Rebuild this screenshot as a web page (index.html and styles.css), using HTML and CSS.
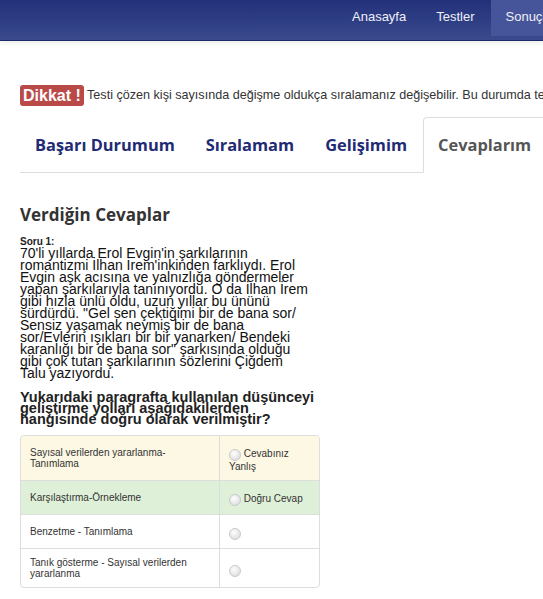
FILE: index.html
```html
<!DOCTYPE html>
<html lang="tr">
<head>
<meta charset="utf-8">
<title>Sonuçlarım</title>
<link rel="stylesheet" href="styles.css">
</head>
<body>
<header class="navbar">
  <nav class="nav">
    <a class="nav-item" href="#">Anasayfa</a>
    <a class="nav-item" href="#">Testler</a>
    <a class="nav-item active" href="#">Sonuçlarım</a>
    <a class="nav-item" href="#">Çıkış</a>
  </nav>
</header>
<main class="page">
  <p class="notice"><span class="label">Dikkat !</span> Testi çözen kişi sayısında değişme oldukça sıralamanız değişebilir. Bu durumda testi tekrar kontrol ediniz.</p>
  <ul class="tabs">
    <li class="tab"><a href="#">Başarı Durumum</a></li>
    <li class="tab"><a href="#">Sıralamam</a></li>
    <li class="tab"><a href="#">Gelişimim</a></li>
    <li class="tab active"><a href="#">Cevaplarım</a></li>
  </ul>
  <section class="answers">
    <h2 class="title">Verdiğin Cevaplar</h2>
    <div class="qnum">Soru 1:</div>
    <p class="passage">70'li yıllarda Erol Evgin'in şarkılarının romantizmi İlhan İrem'inkinden farklıydı. Erol Evgin aşk acısına ve yalnızlığa göndermeler yapan şarkılarıyla tanınıyordu. O da İlhan İrem gibi hızla ünlü oldu, uzun yıllar bu ününü sürdürdü. "Gel sen çektiğimi bir de bana sor/ Sensiz yaşamak neymiş bir de bana sor/Evlerin ışıkları bir bir yanarken/ Bendeki karanlığı bir de bana sor" şarkısında olduğu gibi çok tutan şarkılarının sözlerini Çiğdem Talu yazıyordu.</p>
    <p class="question">Yukarıdaki paragrafta kullanılan düşünceyi geliştirme yolları aşağıdakilerden hangisinde doğru olarak verilmiştir?</p>
    <table class="options">
      <tr class="warn">
        <td class="opt">Sayısal verilerden yararlanma-Tanımlama</td>
        <td class="res"><span class="radio"></span> Cevabınız Yanlış</td>
      </tr>
      <tr class="ok">
        <td class="opt">Karşılaştırma-Örnekleme</td>
        <td class="res"><span class="radio"></span> Doğru Cevap</td>
      </tr>
      <tr>
        <td class="opt">Benzetme - Tanımlama</td>
        <td class="res"><span class="radio"></span></td>
      </tr>
      <tr>
        <td class="opt">Tanık gösterme - Sayısal verilerden yararlanma</td>
        <td class="res"><span class="radio"></span></td>
      </tr>
    </table>
  </section>
</main>
</body>
</html>
```
FILE: styles.css
```css
html, body {
  margin: 0;
  padding: 0;
  overflow: hidden;
  background: #fff;
  font-family: "Liberation Sans", Arial, sans-serif;
  color: #333;
}

.navbar {
  height: 40px;
  background: linear-gradient(to bottom, #22317a, #3a4a8c);
  border-bottom: 1px solid #1c2a68;
  box-shadow: 0 2px 5px rgba(0, 0, 0, 0.08);
}

.nav {
  display: flex;
  padding-left: 337px;
  width: 800px;
}

.nav-item {
  display: block;
  height: 36px;
  line-height: 33px;
  padding: 0 15px;
  font-size: 13px;
  color: #eef0f8;
  text-decoration: none;
  white-space: nowrap;
}

.nav-item.active {
  background: #46559a;
  margin-left: 1px;
}

.page {
  padding: 0 20px;
  width: 900px;
}

.notice {
  margin: 44px 0 0;
  font-size: 12.6px;
  line-height: 21px;
  white-space: nowrap;
}

.label {
  display: inline-block;
  background: #b94a48;
  color: #fff;
  font-weight: bold;
  font-size: 16px;
  line-height: 21px;
  padding: 0 3px;
  border-radius: 3px;
  vertical-align: top;
}

.tabs {
  list-style: none;
  margin: 11px 0 0;
  padding: 0;
  display: flex;
  border-bottom: 1px solid #ddd;
}

.tab {
  margin-right: 1px;
  margin-bottom: -1px;
}

.tab a {
  display: block;
  height: 54px;
  line-height: 54px;
  padding: 0 14px;
  border: 1px solid transparent;
  border-radius: 4px 4px 0 0;
  font-family: "Open Sans", sans-serif;
  font-weight: 700;
  font-size: 16.4px;
  color: #1f2b74;
  text-decoration: none;
  white-space: nowrap;
}

.tab.active a {
  border-color: #ddd #ddd transparent;
  background: #fff;
  color: #555;
}

.answers {
  width: 300px;
}

.title {
  margin: 30px 0 0;
  font-family: "Open Sans", sans-serif;
  font-weight: 700;
  font-size: 17px;
  line-height: 24px;
  color: #333;
}

.qnum {
  margin-top: 10px;
  font-size: 10px;
  font-weight: bold;
  line-height: 10px;
  color: #222;
}

.passage {
  margin: 0;
  width: 291px;
  font-size: 14px;
  line-height: 12px;
  color: #111;
}

.question {
  margin: 13px 0 10px;
  font-weight: bold;
  font-size: 14.5px;
  line-height: 11px;
  color: #222;
}

.options {
  width: 300px;
  border-collapse: separate;
  border-spacing: 0;
  border: 1px solid #ddd;
  border-radius: 4px;
  font-size: 10px;
  color: #333;
}

.options td {
  padding: 8px 9px;
  vertical-align: middle;
  border-top: 1px solid #ddd;
  line-height: 11px;
}

.options tr:first-child td {
  border-top: 0;
}

.options td.res {
  border-left: 1px solid #ddd;
  width: 81px;
}

.options tr.warn td {
  background: #fcf8e3;
}

.options tr.ok td {
  background: #dff0d8;
}

.options tr.warn td:first-child {
  border-top-left-radius: 4px;
}

.options tr.warn td:last-child {
  border-top-right-radius: 4px;
}

.radio {
  display: inline-block;
  width: 12px;
  height: 12px;
  margin-top: 5px;
  border-radius: 50%;
  border: 1px solid #cacaca;
  background: radial-gradient(circle at 40% 35%, #fefefe, #e2e2e2 70%, #d4d4d4);
  vertical-align: -4px;
  box-sizing: border-box;
}
```
